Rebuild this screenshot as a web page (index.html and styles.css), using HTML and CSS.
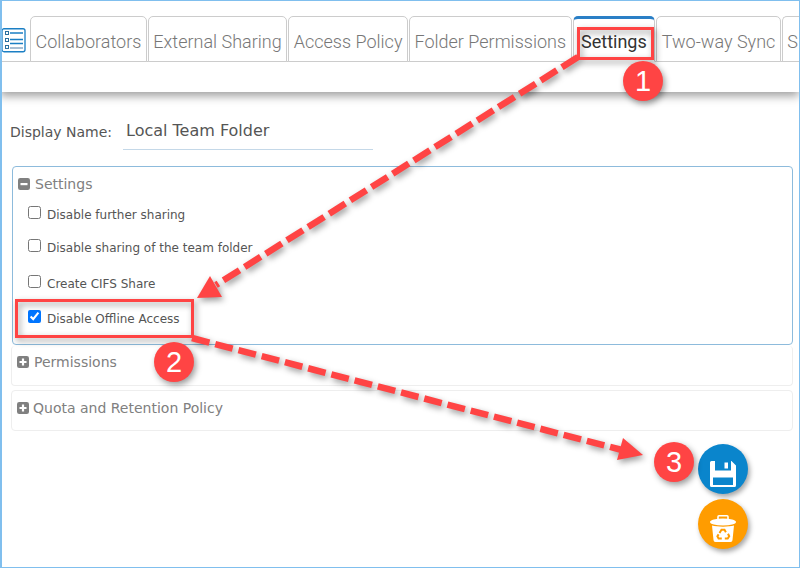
FILE: index.html
```html
<!DOCTYPE html>
<html lang="en">
<head>
<meta charset="utf-8">
<title>Team Folder Settings</title>
<link rel="stylesheet" href="styles.css">
</head>
<body>
<div class="frame">
  <header class="head">
    <nav class="tabs">
      <span class="list-icon">
        <svg width="25" height="25" viewBox="0 0 25 25" fill="none" stroke="#1b7fc4">
          <rect x="1" y="0.750" width="23" height="23" rx="2" stroke-width="1.3"/>
          <g stroke-width="1" stroke="#2a6f9f"><rect x="4.500" y="3.500" width="3" height="3"/><rect x="4.500" y="10.500" width="3" height="3"/><rect x="4.500" y="17.500" width="3" height="3"/></g>
          <path d="M9 5h13M9 11.500h13M9 15.500h13" stroke-width="1.300"/>
          <path d="M9 20h13" stroke="#8aa9c4" stroke-width="1.500"/>
        </svg>
      </span>
      <a class="tab">Collaborators</a>
      <a class="tab">External Sharing</a>
      <a class="tab">Access Policy</a>
      <a class="tab">Folder Permissions</a>
      <a class="tab active">Settings</a>
      <a class="tab">Two-way Sync</a>
      <a class="tab last">S</a>
    </nav>
    <div class="subbar"></div>
  </header>

  <main class="content">
    <div class="name-row">
      <label class="name-label">Display Name:</label>
      <div class="name-value">Local Team Folder</div>
    </div>

    <section class="panel open">
      <h3 class="panel-title">
        <svg class="toggle" viewBox="0 0 12 12"><rect width="12" height="12" rx="2.2" fill="#808080"/><rect x="2.5" y="5" width="7" height="2.2" fill="#fff"/></svg>
        Settings
      </h3>
      <label class="check c1"><input type="checkbox">Disable further sharing</label>
      <label class="check c2"><input type="checkbox">Disable sharing of the team folder</label>
      <label class="check c3"><input type="checkbox">Create CIFS Share</label>
      <label class="check c4"><input type="checkbox" checked>Disable Offline Access</label>
    </section>

    <section class="panel closed first">
      <h3 class="panel-title">
        <svg class="toggle" viewBox="0 0 12 12"><rect width="12" height="12" rx="2.2" fill="#808080"/><path d="M2.5 6h7M6 2.5v7" stroke="#fff" stroke-width="2.2"/></svg>
        Permissions
      </h3>
    </section>
    <section class="panel closed second">
      <h3 class="panel-title">
        <svg class="toggle" viewBox="0 0 12 12"><rect width="12" height="12" rx="2.2" fill="#808080"/><path d="M2.5 6h7M6 2.5v7" stroke="#fff" stroke-width="2.2"/></svg>
        Quota and Retention Policy
      </h3>
    </section>

    <div class="actions">
      <button class="fab save" aria-label="Save">
        <svg width="26" height="26" viewBox="0 0 26 26">
          <path fill="#fff" d="M1.500 0H21.500L26 4.500V24.500A1.500 1.500 0 0 1 24.500 26H1.500A1.500 1.500 0 0 1 0 24.500V1.500A1.500 1.500 0 0 1 1.500 0Z"/>
          <rect x="5" y="0" width="16" height="9.500" fill="#0a85cc"/>
          <rect x="14.500" y="1.500" width="3.500" height="6" fill="#fff"/>
          <rect x="3" y="16.500" width="20" height="7.500" fill="#0a85cc"/>
        </svg>
      </button>
      <button class="fab trash" aria-label="Delete">
        <svg width="26" height="27" viewBox="0 0 26 27">
          <path fill="none" stroke="#fff" stroke-width="1.600" d="M8 5V1.800a1 1 0 0 1 1-1h8a1 1 0 0 1 1 1V5"/>
          <ellipse cx="13" cy="7" rx="13" ry="3.600" fill="#fff"/>
          <path fill="#fff" d="M2 10.500c5 1.500 17 1.500 22 0l-1.500 14.500a2 2 0 0 1-2 2h-15a2 2 0 0 1-2-2z"/>
          <g fill="none" stroke="#ff9c00" stroke-width="2">
            <path d="M9.500 18l2-3.200h3l1.400 2.400"/>
            <path d="M18 18.800l1.200 2.400-1.500 2.300h-2.900"/>
            <path d="M11.800 23.500H8.600l-1.200-2.300 1.200-1.800"/>
          </g>
        </svg>
      </button>
    </div>
  </main>

  <svg class="marks" width="800" height="568" viewBox="0 0 800 568">
    <g class="mark-shadow">
      <g fill="none" stroke="#ff4444">
        <rect x="578.500" y="28.500" width="74" height="30" stroke-width="3"/>
        <rect x="16.500" y="300.500" width="176" height="36" stroke-width="3"/>
        <path d="M578 57L216 285" stroke-width="6.500" stroke-dasharray="19 6"/>
        <path d="M192 338L622 450" stroke-width="6.500" stroke-dasharray="18 6"/>
      </g>
      <g fill="#ff4444">
        <path d="M197 298L210 276L222 297Z"/>
        <path d="M643 455L623 438L617 460Z"/>
        <circle cx="643" cy="81" r="20"/>
        <circle cx="174" cy="362" r="20"/>
        <circle cx="674" cy="462" r="20"/>
      </g>
    </g>
    <g class="mark-num">
      <text x="643" y="91">1</text>
      <text x="174" y="372">2</text>
      <text x="674" y="472">3</text>
    </g>
  </svg>
</div>
</body>
</html>
```
FILE: styles.css
```css
* { box-sizing: border-box; }
html, body { margin: 0; padding: 0; background: #fff; }
.frame {
  position: relative;
  width: 800px;
  height: 568px;
  overflow: hidden;
  border: 1px solid #80bfee;
  border-left-width: 2px;
  font-family: "DejaVu Sans", sans-serif;
}
.head {
  height: 91px;
  padding-top: 15px;
  margin-left: -2px;
  background: #fff;
  box-shadow: 0 4px 9px rgba(0, 0, 0, .38);
}
.tabs {
  display: flex;
  height: 46px;
  border-bottom: 1px solid #ccc;
  padding-left: 1px;
}
.list-icon { width: 29px; padding-top: 12px; flex: none; line-height: 0; }
.tab {
  flex: none;
  height: 46px;
  margin-right: 1px;
  padding: 0 4.5px;
  border: 1px solid #ccc;
  border-radius: 5px 5px 0 0;
  background: #fff;
  font: 300 18px/50px Roboto, sans-serif;
  color: #777;
  white-space: nowrap;
}
.tab.active {
  padding: 0 7.500px;
  border-top: 3px solid #2a7fc6;
  line-height: 46px;
  color: #333;
  font-weight: 400;
  border-bottom-color: #fff;
}
.tab.last { flex: 1 1 0; min-width: 0; margin-right: 0; border-right: 0; border-radius: 5px 0 0 0; }
.content { padding: 0; }
.name-row { display: flex; align-items: flex-start; height: 74px; padding: 29px 0 0 8px; }
.name-label { font-size: 14px; line-height: 22px; color: #555; width: 113px; }
.name-value {
  width: 250px;
  height: 30px;
  margin-top: -1px;
  padding-left: 3px;
  border-bottom: 1px solid #c4d8e8;
  font-size: 16px;
  line-height: 22px;
  color: #555;
}
.panel { margin-left: 10px; width: 781px; border-radius: 4px; background: #fff; }
.panel.open { height: 179px; border: 1px solid #8dbbdc; padding: 7px 0 0 5px; }
.panel.closed { border: 1px solid #eee; height: 40px; margin-left: 9px; width: 782px; padding: 6px 0 0 5px; }
.panel.first { border-top: 0; margin-top: 1px; }
.panel.second { height: 41px; margin-top: 4px; padding-top: 7px; }
.panel-title {
  display: flex;
  align-items: center;
  gap: 5px;
  margin: 0;
  font-size: 14px;
  font-weight: 400;
  line-height: 20px;
  color: #808080;
}
.panel.second .panel-title { gap: 4px; }
.toggle { width: 12px; height: 12px; flex: none; }
.check {
  display: flex;
  align-items: center;
  height: 16px;
  margin-left: 11px;
  font-size: 12px;
  line-height: 16px;
  color: #555;
}
.check input { width: 13px; height: 13px; margin: 0 5px 0 0; position: relative; top: -3px; left: -1px; accent-color: #0075ff; }
.c1 { margin-top: 13px; }
.c2 { margin-top: 17px; }
.c3 { margin-top: 20px; }
.c4 { margin-top: 19px; }
.actions {
  display: flex;
  flex-direction: column;
  align-items: flex-end;
  gap: 5px;
  margin-top: 13px;
  padding-right: 51px;
}
.fab {
  display: flex;
  align-items: center;
  justify-content: center;
  width: 50px;
  height: 50px;
  padding: 9px 0 0;
  border: 0;
  border-radius: 50%;
  box-shadow: 2px 3px 5px rgba(0, 0, 0, .35);
}
.save { background: #0a85cc; }
.trash { background: #ff9c00; }
.marks { position: absolute; left: -2px; top: -1px; pointer-events: none; }
.mark-shadow { filter: drop-shadow(2px 3px 3px rgba(0, 0, 0, .4)); }
.mark-num { font: 400 29px "Liberation Sans", sans-serif; fill: #fff; text-anchor: middle; }
```
